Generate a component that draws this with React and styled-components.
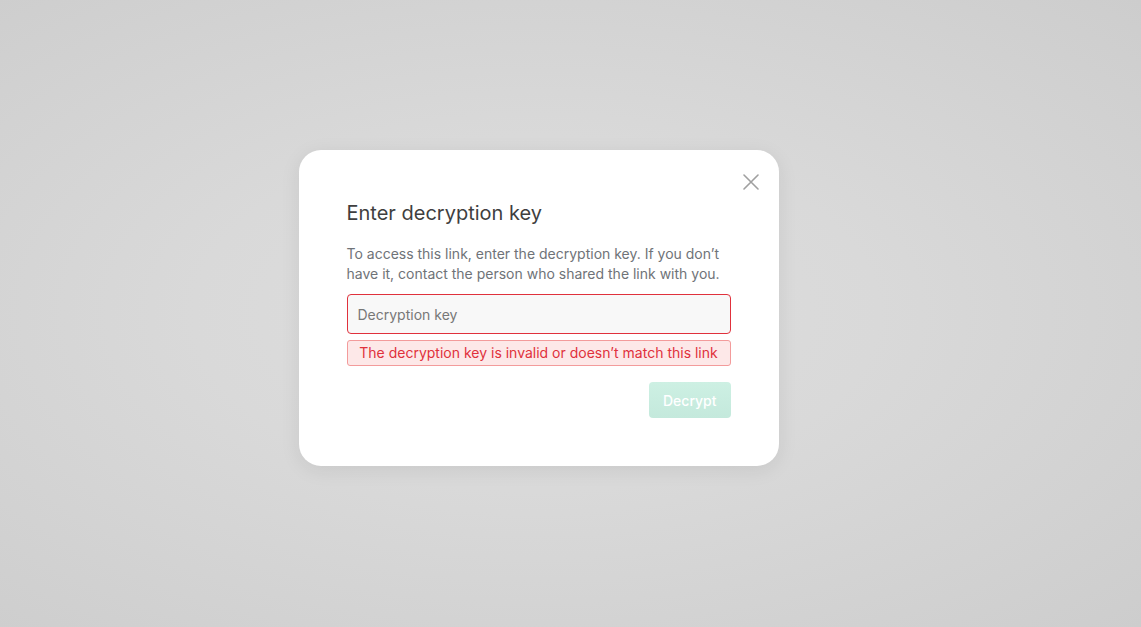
import React from 'react';
import styled, { createGlobalStyle } from 'styled-components';

const GlobalStyle = createGlobalStyle`
  html, body {
    margin: 0;
    height: 100%;
  }
  body {
    font-family: Inter, "Noto Sans", sans-serif;
    -webkit-font-smoothing: antialiased;
  }
`;

const Backdrop = styled.div`
  width: 100vw;
  height: 100vh;
  display: flex;
  align-items: flex-start;
  justify-content: center;
  padding: 150px 64px 0 0;
  box-sizing: border-box;
  background: radial-gradient(ellipse at 47% 50%, #dedede 0%, #d9d9d9 40%, #cdcdcd 100%);
`;

const Dialog = styled.div`
  position: relative;
  width: 480px;
  box-sizing: border-box;
  padding: 50px 48px 48px;
  background: #fff;
  border-radius: 22px;
  box-shadow: 0 4px 20px rgba(0, 0, 0, 0.08);
`;

const Close = styled.button`
  position: absolute;
  top: 20px;
  right: 16px;
  width: 24px;
  height: 24px;
  padding: 0;
  border: 0;
  background: none;
  cursor: pointer;
  display: flex;
  align-items: center;
  justify-content: center;
`;

const Title = styled.h2`
  margin: 0 0 18px;
  font-size: 20px;
  line-height: 26px;
  font-weight: 400;
  color: #3f3f3f;
`;

const Text = styled.p`
  margin: 0 0 10px;
  font-size: 14px;
  line-height: 20px;
  color: #6f7378;
`;

const Input = styled.input`
  display: block;
  width: 100%;
  height: 40px;
  box-sizing: border-box;
  padding: 0 10px;
  font-family: inherit;
  font-size: 14px;
  color: #333;
  background: #f8f8f8;
  border: 1px solid ${(p) => (p.$invalid ? '#e0313c' : '#ddd')};
  border-radius: 4px;
  outline: none;
  caret-color: #555;

  &::placeholder {
    color: #777;
  }
`;

const ErrorBox = styled.div`
  margin-top: 6px;
  height: 26px;
  box-sizing: border-box;
  border: 1px solid #f39b9b;
  background: #fde8e8;
  border-radius: 3px;
  color: #e0313c;
  font-size: 14px;
  line-height: 24px;
  text-align: center;
`;

const Actions = styled.div`
  display: flex;
  justify-content: flex-end;
  margin-top: 16px;
`;

const Button = styled.button`
  height: 36px;
  padding: 0 14px;
  border: 0;
  border-radius: 4px;
  font-family: inherit;
  font-size: 14px;
  font-weight: 500;
  color: #fff;
  background: linear-gradient(#cdf0e3, #c4e9dc);
  cursor: not-allowed;
`;

export default function App() {
  return (
    <>
      <GlobalStyle />
      <Backdrop>
        <Dialog>
          <Close aria-label="Close">
            <svg width="16" height="16" viewBox="0 0 16 16">
              <path d="M1 1L15 15M15 1L1 15" stroke="#a0a0a0" strokeWidth="1.6" strokeLinecap="round" />
            </svg>
          </Close>
          <Title>Enter decryption key</Title>
          <Text>
            To access this link, enter the decryption key. If you don’t have it, contact the person who
            shared the link with you.
          </Text>
          <Input $invalid placeholder="Decryption key" autoFocus />
          <ErrorBox>The decryption key is invalid or doesn’t match this link</ErrorBox>
          <Actions>
            <Button disabled>Decrypt</Button>
          </Actions>
        </Dialog>
      </Backdrop>
    </>
  );
}
